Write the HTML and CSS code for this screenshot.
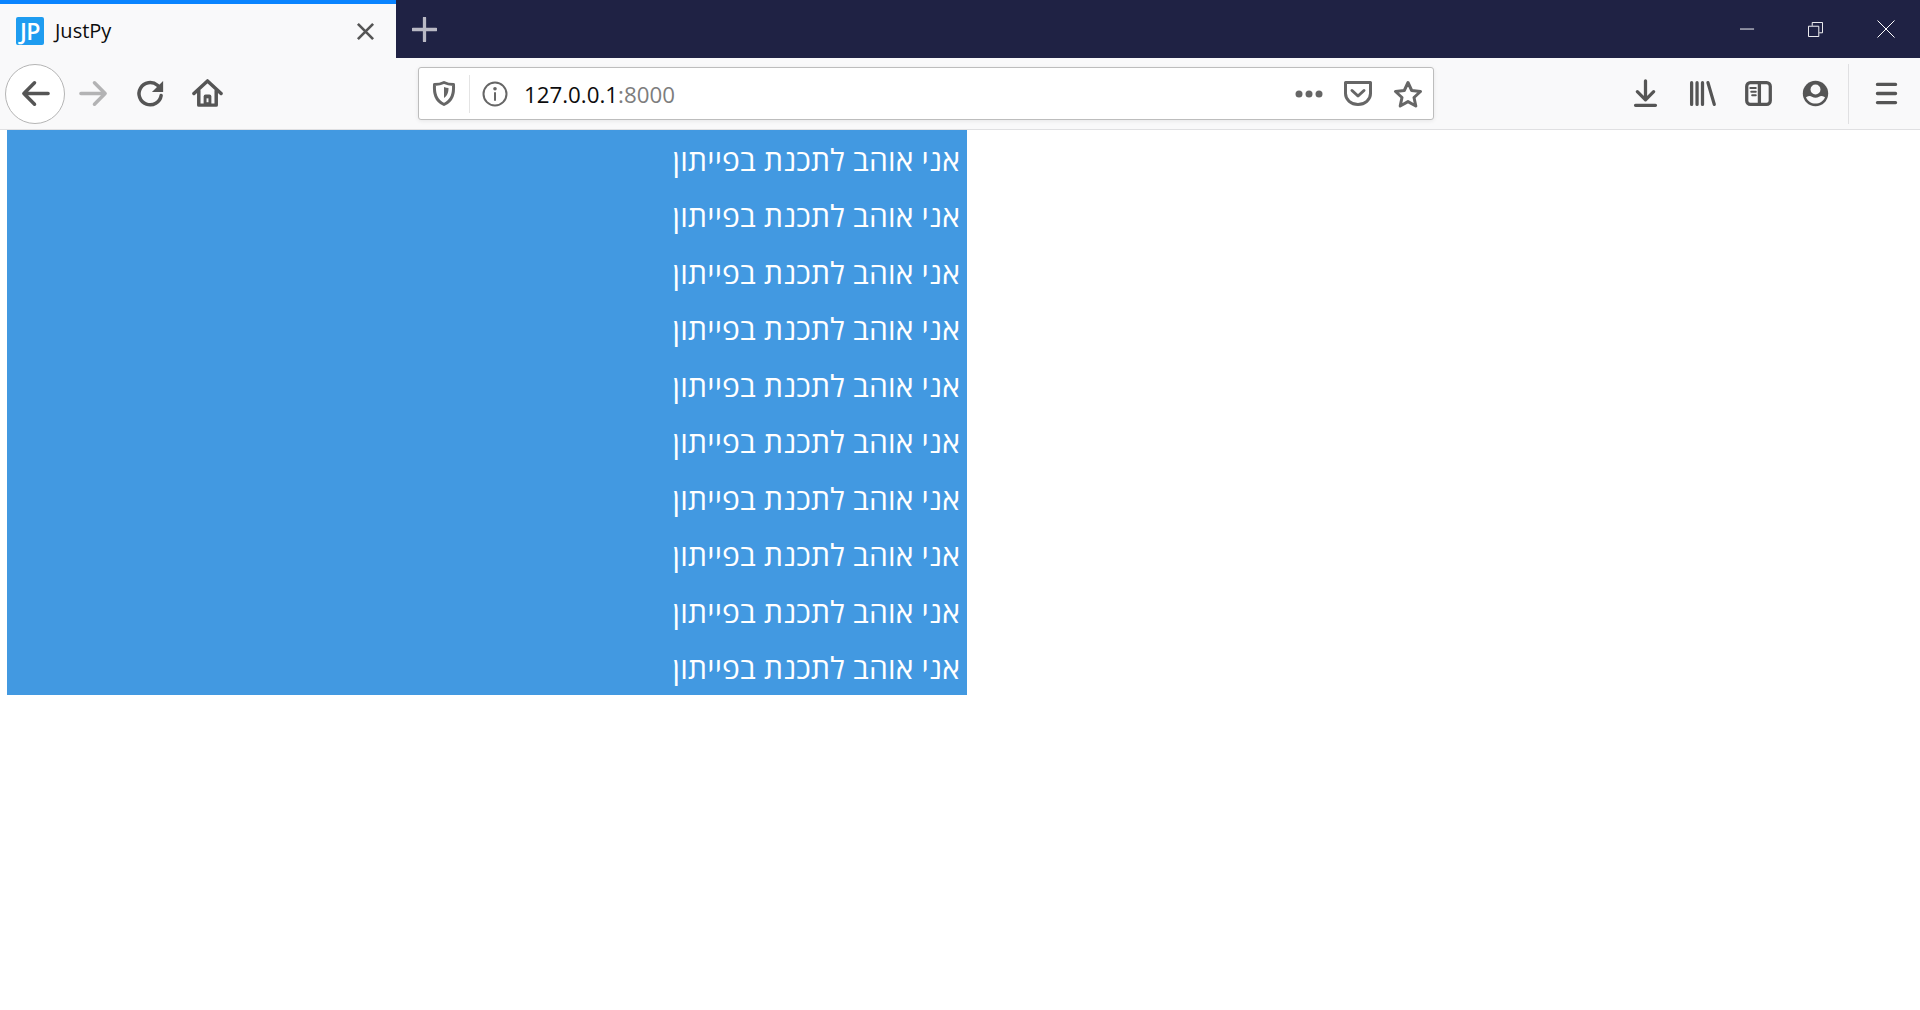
FILE: index.html
```html
<!DOCTYPE html>
<html lang="he">
<head>
  <meta charset="UTF-8">
  <title>JustPy</title>
  <link rel="stylesheet" href="styles.css">
</head>
<body>
  <header class="tabbar">
    <div class="tab">
      <span class="favicon" dir="ltr">JP</span>
      <span class="tab-title" dir="ltr">JustPy</span>
      <svg class="tab-close" viewBox="0 0 20 20"><path d="M2 2l16 16M18 2L2 18"/></svg>
    </div>
    <svg class="new-tab" viewBox="0 0 26 26"><path d="M13 1v24M1 13h24"/></svg>
    <div class="win-controls">
      <svg class="win-btn" viewBox="0 0 16 16"><path d="M0 7.5h15"/></svg>
      <svg class="win-btn" viewBox="0 0 16 16"><path d="M.5 4.5h11v11H.5zM4.5 4V.5h11v11H12"/></svg>
      <svg class="win-btn" viewBox="0 0 18 18"><path d="M.5.5l17 17M17.5.5l-17 17"/></svg>
    </div>
  </header>

  <nav class="toolbar">
    <div class="nav-btns">
      <div class="back-btn">
        <svg class="icon" viewBox="0 0 32 32"><path d="M29 16H4M15 5L4 16l11 11"/></svg>
      </div>
      <div class="tool-btn faded">
        <svg class="icon" viewBox="0 0 32 32"><path d="M3 16h25M17 5l11 11-11 11"/></svg>
      </div>
      <div class="tool-btn">
        <svg class="icon" viewBox="0 0 32 32"><path d="M27 18a11.500 11.500 0 1 1-3.800-10.500L27 11"/><path class="solid" d="M29 3v11.500H17.500z"/></svg>
      </div>
      <div class="tool-btn">
        <svg class="icon" viewBox="0 0 32 32"><path d="M2 16L16 3l14 13M7 13v15h18V13"/><path class="solid" d="M12 28V19a2 2 0 0 1 2-2h4a2 2 0 0 1 2 2v9z"/><path class="cutout" d="M15 21h2v4h-2z"/></svg>
      </div>
    </div>

    <div class="urlbar">
      <svg class="url-icon shield" viewBox="0 0 24 26"><path d="M12 2c3 1.500 6 2 9.500 2 .5 9-1 16-9.500 20C3.500 20 2 13 2.500 4 6 4 9 3.500 12 2z"/><path class="solid" d="M12 6.500c1.500.5 3 1 4.500 1 0 4-.8 7.500-4.500 10z"/></svg>
      <span class="url-sep"></span>
      <svg class="url-icon info" viewBox="0 0 26 26"><circle cx="13" cy="13" r="11.500"/><path d="M13 12v7"/><circle class="solid" cx="13" cy="7.800" r="1.800"/></svg>
      <span class="url-text" dir="ltr">127.0.0.1<span class="url-port">:8000</span></span>
      <svg class="url-icon dots" viewBox="0 0 28 8"><circle class="solid" cx="4" cy="4" r="3.500"/><circle class="solid" cx="14" cy="4" r="3.500"/><circle class="solid" cx="24" cy="4" r="3.500"/></svg>
      <svg class="url-icon pocket" viewBox="0 0 30 27"><path d="M2.500 2.500h25v11a12.500 11 0 0 1-25 0z"/><path d="M9 10.500l6 5.500 6-5.500"/></svg>
      <svg class="url-icon star" viewBox="0 0 30 28"><path d="M15 2.500l3.700 8 8.800 1-6.500 6 1.800 8.500-7.800-4.400L7.200 26 9 17.500l-6.500-6 8.800-1z"/></svg>
    </div>

    <div class="tools-right">
      <div class="tool-btn">
        <svg class="icon" viewBox="0 0 32 32"><path d="M16 2v20M7 14l9 9 9-9M5 29h22"/></svg>
      </div>
      <div class="tool-btn library">
        <svg class="icon" viewBox="0 0 32 32"><path d="M4 4v24M10 4v24M16 4v24M22 4l7 24"/></svg>
      </div>
      <div class="tool-btn">
        <svg class="icon" viewBox="0 0 32 32"><rect x="3" y="4" width="26" height="24" rx="4"/><path d="M17 4v24"/><path class="thin-line" d="M7 10h6M8 14h5M9 18h4"/></svg>
      </div>
      <div class="tool-btn">
        <svg class="icon" viewBox="0 0 32 32"><circle class="solid" cx="16" cy="16" r="14"/><circle class="cutout" cx="16" cy="11.500" r="5.500"/><path class="cutout" d="M5.500 20c3-1.500 5-1.500 6.500-.5 2.500 1.500 5.500 1.500 8 0 1.500-1 3.500-1 6.500.5-2 4.500-6 7-10.500 7S7.500 24.500 5.500 20z"/></svg>
      </div>
      <span class="tool-sep"></span>
      <div class="tool-btn menu">
        <svg class="icon" viewBox="0 0 32 32"><path d="M6 6h20M6 16h20M6 26h20"/></svg>
      </div>
    </div>
  </nav>

  <main class="page">
    <div class="rows" dir="rtl">
      <div class="row">אני אוהב לתכנת בפייתון</div>
      <div class="row">אני אוהב לתכנת בפייתון</div>
      <div class="row">אני אוהב לתכנת בפייתון</div>
      <div class="row">אני אוהב לתכנת בפייתון</div>
      <div class="row">אני אוהב לתכנת בפייתון</div>
      <div class="row">אני אוהב לתכנת בפייתון</div>
      <div class="row">אני אוהב לתכנת בפייתון</div>
      <div class="row">אני אוהב לתכנת בפייתון</div>
      <div class="row">אני אוהב לתכנת בפייתון</div>
      <div class="row">אני אוהב לתכנת בפייתון</div>
    </div>
  </main>
</body>
</html>
```

FILE: styles.css
```css
body { margin: 0; height: 1010px; overflow: hidden; background: #fff; font-family: "Open Sans", "Noto Sans", sans-serif; }
svg { display: block; fill: none; }

/* tab strip */
.tabbar { display: flex; align-items: center; height: 58px; background: #1f2244; }
.tab { display: flex; align-items: center; box-sizing: border-box; width: 396px; height: 58px; padding: 0 16px; background: #f9f9fa; border-top: 4px solid #0a84ff; }
.favicon { width: 28px; height: 28px; margin-right: 11px; background: #1e9cf0; border-radius: 2px; color: #fff; font-size: 23px; font-weight: 600; line-height: 28px; text-align: center; letter-spacing: -.5px; }
.tab-title { padding-bottom: 2px; font-size: 20px; color: #0c0c0d; }
.tab-close { width: 19px; height: 19px; margin-left: auto; margin-right: 5px; stroke: #555; stroke-width: 2.8; }
.new-tab { width: 25px; height: 25px; margin-left: 16px; stroke: #b9b9c4; stroke-width: 3.4; stroke-linecap: round; }
.win-controls { display: flex; align-items: center; gap: 54px; margin-left: auto; padding-right: 26px; }
.win-btn { width: 15px; height: 15px; stroke: #fff; stroke-width: 1; }
.win-btn:first-child { margin-right: -1px; }
.win-btn:last-child { width: 18px; height: 18px; margin-right: -1px; }

/* toolbar */
.toolbar { display: flex; align-items: center; box-sizing: border-box; height: 72px; background: #f9f9fa; border-bottom: 1px solid #e0e0e2; }
.nav-btns { display: flex; align-items: center; width: 418px; padding-left: 5px; box-sizing: border-box; }
.nav-btns .icon { width: 31px; height: 31px; }
.back-btn { display: flex; align-items: center; justify-content: center; box-sizing: border-box; width: 60px; height: 60px; background: #fff; border: 1px solid #b5b5b5; border-radius: 50%; }
.tool-btn { display: flex; align-items: center; justify-content: center; width: 57px; height: 40px; }
.tool-btn.faded { opacity: .42; }
.tool-btn.library { margin-right: -1px; }
.icon { width: 29px; height: 29px; stroke: #555; stroke-width: 3.6; stroke-linecap: round; stroke-linejoin: round; }
.solid { fill: #555; stroke: none; }
.cutout { fill: #f9f9fa; stroke: none; }
.thin-line { stroke-width: 2.2; }

/* address bar */
.urlbar { display: flex; align-items: center; box-sizing: border-box; width: 1016px; height: 53px; background: #fff; border: 1px solid #bdbdbd; border-radius: 3px; box-shadow: 0 1px 4px rgba(0, 0, 0, .08); }
.url-icon { stroke: #666; stroke-width: 3; stroke-linecap: round; stroke-linejoin: round; }
.url-icon .solid { fill: #666; }
.info { stroke-width: 2; }
.shield { width: 24px; height: 27px; margin-left: 13px; }
.url-sep { width: 1px; height: 38px; margin: 0 12px 0 13px; background: #e4e4e4; }
.info { width: 26px; height: 26px; }
.url-text { margin-left: 16px; padding-top: 2px; font-size: 22.3px; color: #0c0c0d; }
.url-port { color: #7d7d7d; }
.dots { width: 28px; height: 8px; margin-left: auto; }
.pocket { width: 30px; height: 27px; margin-left: 20px; }
.star { width: 30px; height: 28px; margin-left: 20px; margin-right: 10px; }

.tools-right { display: flex; align-items: center; margin-left: auto; }
.tool-btn.menu { width: 68px; }
.tool-sep { width: 1px; height: 60px; margin: 0 3px 0 4px; background: #e0e0e2; }

/* page content */
.page { padding-left: 7px; }
.rows { width: 960px; background: #4299e1; color: #fff; }
.row { box-sizing: border-box; height: 56.5px; padding: 1.5px 7px 0; font-size: 30px; letter-spacing: .2px; line-height: 55px; }
```
